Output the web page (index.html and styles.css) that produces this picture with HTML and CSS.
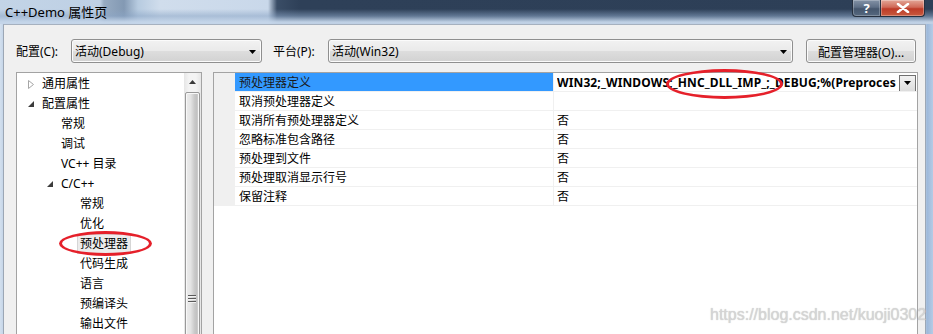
FILE: index.html
```html
<!DOCTYPE html>
<html>
<head>
    <meta charset="UTF-8">
    <title>C++Demo 属性页</title>
    <link rel="stylesheet" href="styles.css">
</head>
<body>
    <div class="window">
        <div class="titlebar">
            <span class="title">C++Demo 属性页</span>
            <div class="caption">
                <span class="cap help">?</span>
                <span class="cap close">
                    <svg width="14" height="10" viewBox="0 0 14 10"><path d="M2 1 L12 9 M12 1 L2 9" stroke="#fff" stroke-width="2.6" stroke-linecap="round"/></svg>
                </span>
            </div>
        </div>

        <div class="frame">
            <div class="client">
                <div class="toolbar">
                    <span class="label">配置(C):</span>
                    <div class="combo config">
                        <span>活动(Debug)</span>
                        <svg class="arrow" width="7" height="4" viewBox="0 0 7 4"><path d="M0 0 H7 L3.5 4 Z" fill="#000"/></svg>
                    </div>
                    <span class="label second">平台(P):</span>
                    <div class="combo platform">
                        <span>活动(Win32)</span>
                        <svg class="arrow" width="7" height="4" viewBox="0 0 7 4"><path d="M0 0 H7 L3.5 4 Z" fill="#000"/></svg>
                    </div>
                    <button class="manager">配置管理器(O)...</button>
                </div>

                <div class="panes">
                    <div class="tree">
                        <div class="tree-list">
                            <div class="node lv0"><span class="twisty"><svg width="6" height="9" viewBox="0 0 6 9"><path d="M0.5 0.5 L5.5 4.5 L0.5 8.5 Z" fill="#fff" stroke="#a6a6a6"/></svg></span>通用属性</div>
                            <div class="node lv0"><span class="twisty"><svg width="7" height="7" viewBox="0 0 7 7"><path d="M6 0 V6 H0 Z" fill="#3c3c3c"/></svg></span>配置属性</div>
                            <div class="node lv1"><span class="twisty"></span>常规</div>
                            <div class="node lv1"><span class="twisty"></span>调试</div>
                            <div class="node lv1"><span class="twisty"></span>VC++ 目录</div>
                            <div class="node lv1"><span class="twisty"><svg width="7" height="7" viewBox="0 0 7 7"><path d="M6 0 V6 H0 Z" fill="#3c3c3c"/></svg></span>C/C++</div>
                            <div class="node lv2"><span class="twisty"></span>常规</div>
                            <div class="node lv2"><span class="twisty"></span>优化</div>
                            <div class="node lv2"><span class="twisty"></span><span class="selected">预处理器</span></div>
                            <div class="node lv2"><span class="twisty"></span>代码生成</div>
                            <div class="node lv2"><span class="twisty"></span>语言</div>
                            <div class="node lv2"><span class="twisty"></span>预编译头</div>
                            <div class="node lv2"><span class="twisty"></span>输出文件</div>
                        </div>
                        <div class="scrollbar">
                            <div class="scroll-up"><svg width="7" height="4" viewBox="0 0 7 4"><path d="M0 4 H7 L3.5 0 Z" fill="#3a3a3a"/></svg></div>
                            <div class="thumb">
                                <div class="grip"><i></i><i></i><i></i></div>
                            </div>
                        </div>
                    </div>

                    <div class="grid">
                        <div class="row active">
                            <div class="gutter"></div>
                            <div class="name">预处理器定义</div>
                            <div class="value">
                                <span class="value-text">WIN32;_WINDOWS;_HNC_DLL_IMP_;_DEBUG;%(Preproces</span>
                                <span class="drop"><svg width="7" height="4" viewBox="0 0 7 4"><path d="M0 0 H7 L3.5 4 Z" fill="#000"/></svg></span>
                            </div>
                        </div>
                        <div class="row">
                            <div class="gutter"></div>
                            <div class="name">取消预处理器定义</div>
                            <div class="value"></div>
                        </div>
                        <div class="row">
                            <div class="gutter"></div>
                            <div class="name">取消所有预处理器定义</div>
                            <div class="value">否</div>
                        </div>
                        <div class="row">
                            <div class="gutter"></div>
                            <div class="name">忽略标准包含路径</div>
                            <div class="value">否</div>
                        </div>
                        <div class="row">
                            <div class="gutter"></div>
                            <div class="name">预处理到文件</div>
                            <div class="value">否</div>
                        </div>
                        <div class="row">
                            <div class="gutter"></div>
                            <div class="name">预处理取消显示行号</div>
                            <div class="value">否</div>
                        </div>
                        <div class="row">
                            <div class="gutter"></div>
                            <div class="name">保留注释</div>
                            <div class="value">否</div>
                        </div>
                    </div>
                </div>
            </div>
        </div>

        <!-- 红色圈注 -->
        <div class="mark mark-define"></div>
        <div class="mark mark-node"></div>
        <div class="watermark">https://blog.csdn.net/kuoji0302</div>
    </div>
</body>
</html>
```

FILE: styles.css
```css
* {
    margin: 0;
    padding: 0;
    box-sizing: border-box;
}

body {
    font-family: "Noto Sans", "Noto Sans CJK SC", sans-serif;
    font-size: 12px;
    color: #000;
    background-color: #2f4159;
    overflow: hidden;
}

.window {
    position: relative;
    width: 933px;
    height: 334px;
    display: flex;
    flex-direction: column;
    overflow: hidden;
}

/* 标题栏 */
.titlebar {
    height: 24px;
    flex: none;
    display: flex;
    justify-content: space-between;
    align-items: flex-start;
    background:
        linear-gradient(to bottom, rgba(0, 0, 0, 0) 0, rgba(0, 0, 0, 0) 9px, rgba(140, 166, 198, 0.55) 16px, rgba(196, 213, 233, 0.97) 22px),
        linear-gradient(to right, #c3d4e7 0, #bed0e4 100px, #97abc2 104px, #8399b3 124px, #b7cbe0 138px, #d0ddec 160px, #c9d8ea 268px, #3a4d66 277px, #2e4058 300px, #2d3f57 100%);
}

.title {
    padding: 3px 0 0 5px;
    font-size: 13px;
    line-height: 18px;
    color: #000;
}

.caption {
    display: flex;
    margin-right: 8px;
}

.cap {
    height: 17px;
    display: flex;
    align-items: center;
    justify-content: center;
    border: 1px solid #26303f;
    border-top: none;
    color: #fff;
    font-weight: bold;
    font-size: 13px;
    line-height: 15px;
}

.cap.help {
    width: 28px;
    border-radius: 0 0 0 4px;
    border-right: none;
    background: linear-gradient(to bottom, #8392a6 0, #5e6f86 45%, #45566d 55%, #56687f 100%);
    box-shadow: inset 0 0 0 1px rgba(255, 255, 255, 0.25);
}

.cap.close {
    width: 45px;
    border-radius: 0 0 4px 0;
    background: linear-gradient(to bottom, #e3a697 0, #d06a58 45%, #bd3b28 55%, #c85a3e 100%);
    box-shadow: inset 0 0 0 1px rgba(255, 255, 255, 0.3);
}

/* 窗口边框与客户区 */
.frame {
    flex: 1;
    display: flex;
    padding: 0 7px 0 3px;
    background: linear-gradient(to right, #d3e0ee 0, #c6d6e9 3px, #c6d6e9 925px, #9cb8da 927px, #b6cbe5 100%);
}

.client {
    flex: 1;
    display: flex;
    flex-direction: column;
    background-color: #f0f0f0;
    border-left: 1px solid #9ca7b5;
    border-right: 1px solid #9ca7b5;
    border-top: 1px solid #a6b1bf;
}

.toolbar {
    display: flex;
    align-items: center;
    height: 38px;
    padding: 14px 9px 0 12px;
}

.label {
    width: 55px;
    padding-top: 2px;
    line-height: 22px;
}

.label.second {
    margin-left: 11px;
}

.combo,
.manager {
    height: 24px;
    border: 1px solid #8f8f8f;
    border-radius: 3px;
    background: linear-gradient(to bottom, #f2f2f2 0, #eaeaea 48%, #dddddd 52%, #d2d2d2 100%);
    box-shadow: inset 0 0 0 1px #fbfbfb;
    font-family: inherit;
    font-size: 12px;
    color: #000;
}

.combo {
    display: flex;
    align-items: center;
    justify-content: space-between;
    padding: 1px 5px 0 3px;
    line-height: 22px;
}

.combo.config {
    width: 191px;
}

.combo.platform {
    width: 465px;
}

.manager {
    width: 110px;
    margin-left: 13px;
    padding-top: 1px;
    text-align: center;
}

/* 左侧树与右侧属性表 */
.panes {
    display: flex;
    gap: 11px;
    padding: 9px 7px 0 12px;
    height: 320px;
    flex: none;
}

.tree {
    width: 186px;
    display: flex;
    background-color: #fff;
    border: 1px solid #a3a3a3;
}

.tree-list {
    flex: 1;
    padding-top: 1px;
}

.node {
    height: 20px;
    line-height: 20px;
    display: flex;
    align-items: center;
    white-space: nowrap;
}

.node.lv0 { padding-left: 11px; }
.node.lv1 { padding-left: 30px; }
.node.lv2 { padding-left: 49px; }

.twisty {
    width: 14px;
    flex: none;
    display: flex;
    align-items: center;
}

.selected {
    margin-left: -3px;
    padding: 0 2px;
    line-height: 18px;
    background-color: #ececec;
    border: 1px solid #d6d6d6;
}

.scrollbar {
    width: 17px;
    flex: none;
    display: flex;
    flex-direction: column;
    background: linear-gradient(to right, #e6e6e6, #f4f4f4 30%, #f4f4f4 70%, #e6e6e6);
}

.scroll-up {
    height: 18px;
    display: flex;
    align-items: center;
    justify-content: center;
}

.thumb {
    flex: 1;
    margin: 1px 1px 0;
    border: 1px solid #999;
    border-radius: 2px 2px 0 0;
    background: linear-gradient(to right, #ececec 0, #e4e4e4 35%, #cacaca 65%, #c2c2c2 80%, #d6d6d6 100%);
    box-shadow: inset 0 0 0 1px #f8f8f8;
    padding-top: 202px;
}

.grip {
    width: 8px;
    margin-left: 2px;
    display: flex;
    flex-direction: column;
    gap: 1px;
}

.grip i {
    height: 2px;
    border-top: 1px solid #5a5a5a;
    border-bottom: 1px solid #f2f2f2;
}

.grid {
    flex: 1;
    background-color: #fff;
    border: 1px solid #a3a3a3;
}

.row {
    display: grid;
    grid-template-columns: 21px 319px 1fr;
    height: 19px;
    border-bottom: 1px solid #f0f0f0;
    line-height: 20px;
    overflow: hidden;
}

.gutter {
    background-color: #f0f0f0;
}

.name {
    padding-left: 4px;
    border-right: 1px solid #f0f0f0;
    white-space: nowrap;
}

.row.active .name {
    background-color: #3399ff;
    color: #1a1a1a;
}

.value {
    display: flex;
    align-items: center;
    padding-left: 3px;
    min-width: 0;
}

.value-text {
    flex: 1;
    min-width: 0;
    overflow: hidden;
    white-space: nowrap;
    font-weight: bold;
    letter-spacing: 0.12px;
}

.drop {
    width: 17px;
    height: 17px;
    margin-right: 1px;
    flex: none;
    display: flex;
    align-items: center;
    justify-content: center;
    border: 1px solid #707070;
    background: linear-gradient(to bottom, #f2f2f2, #dcdcdc);
}

/* 覆盖层 */
.mark {
    position: absolute;
    border: 3px solid #e5202a;
    border-radius: 50%;
}

.mark-define {
    left: 666px;
    top: 69px;
    width: 117px;
    height: 30px;
}

.mark-node {
    left: 59px;
    top: 231px;
    width: 93px;
    height: 25px;
}

.watermark {
    position: absolute;
    left: 710px;
    top: 305px;
    font-family: "Liberation Sans", Arial, sans-serif;
    font-size: 16px;
    line-height: 20px;
    color: rgba(214, 214, 214, 0.95);
    text-shadow: 0 0 1px rgba(150, 150, 150, 0.6);
    white-space: nowrap;
}
```
